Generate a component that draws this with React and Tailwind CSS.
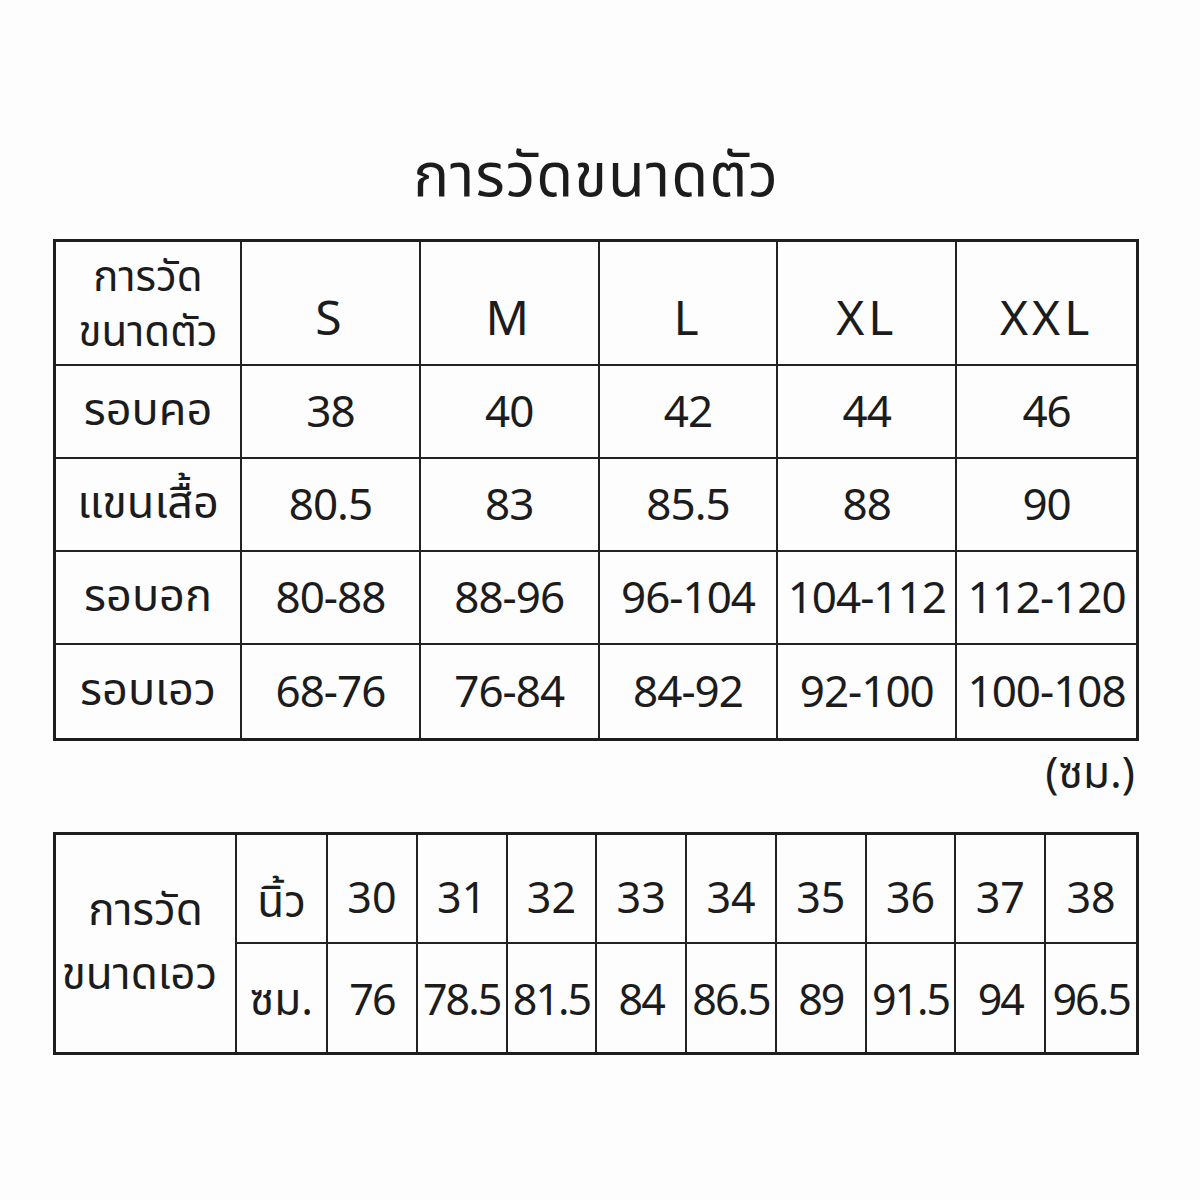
const sizes = ['S', 'M', 'L', 'XL', 'XXL'];

const rows = [
  { label: 'รอบคอ', values: ['38', '40', '42', '44', '46'] },
  { label: 'แขนเสื้อ', values: ['80.5', '83', '85.5', '88', '90'] },
  { label: 'รอบอก', values: ['80-88', '88-96', '96-104', '104-112', '112-120'] },
  { label: 'รอบเอว', values: ['68-76', '76-84', '84-92', '92-100', '100-108'] },
];

const inches = ['30', '31', '32', '33', '34', '35', '36', '37', '38'];
const cms = ['76', '78.5', '81.5', '84', '86.5', '89', '91.5', '94', '96.5'];

const font = { fontFamily: '"Noto Sans Thai", "Noto Sans", "DejaVu Sans", sans-serif' };

const App = () => {
  return (
    <div className="w-[1200px] h-[1200px] bg-[#fdfdfe] text-[#1c1c1c] flex flex-col items-start pl-[53px]" style={font}>
      <h1 className="w-[1086px] mt-[148px] h-[91px] text-center text-[60px] leading-none tracking-[1px]">การวัดขนาดตัว</h1>

      <div className="w-[1086px] border-[3px] border-[#1e1e1e] grid grid-cols-[186px_repeat(5,1fr)] grid-rows-[124px_repeat(4,93px)] text-[44px]">
        <div className="border-r-2 border-b-2 border-[#222] flex flex-col items-center justify-center gap-[2px] pt-2 text-[42px]">
          <span className="block leading-[50px]">การวัด</span>
          <span className="block leading-[56px]">ขนาดตัว</span>
        </div>
        {sizes.map((s, i) => (
          <div
            key={s}
            className={`border-b-2 border-[#222] flex items-center justify-center pt-9 leading-none text-[48px] tracking-[4px] ${i < 4 ? 'border-r-2' : ''}`}
          >
            {s}
          </div>
        ))}
        {rows.map((row, r) => (
          <>
            <div
              key={row.label}
              className={`border-r-2 border-[#222] flex items-center justify-center text-[45px] ${r < 3 ? 'border-b-2' : ''}`}
            >
              {row.label}
            </div>
            {row.values.map((v, i) => (
              <div
                key={row.label + i}
                className={`border-[#222] flex items-center justify-center pt-1 whitespace-nowrap tracking-[-1px] ${i < 4 ? 'border-r-2' : ''} ${r < 3 ? 'border-b-2' : ''}`}
              >
                {v}
              </div>
            ))}
          </>
        ))}
      </div>

      <div className="w-[1086px] flex justify-end pr-[4px] mt-[12px] h-[79px] text-[44px] leading-none">
        (ซม.)
      </div>

      <div className="w-[1086px] border-[3px] border-[#1e1e1e] grid grid-cols-[181px_91px_repeat(9,1fr)] grid-rows-[109px_108px] text-[43px]">
        <div className="row-span-2 border-r-2 border-[#222] flex flex-col items-center justify-center text-[44px]">
          <span className="block leading-[64px]">การวัด</span>
          <span className="block leading-[64px] -ml-3">ขนาดเอว</span>
        </div>
        <div className="border-r-2 border-b-2 border-[#222] flex items-end justify-center pb-4 leading-none text-[44px]">นิ้ว</div>
        {inches.map((v, i) => (
          <div
            key={'in' + i}
            className={`border-b-2 border-[#222] flex items-center justify-center pt-6 ${i < 8 ? 'border-r-2' : ''}`}
          >
            {v}
          </div>
        ))}
        <div className="border-r-2 border-[#222] flex items-center justify-center pt-2 text-[44px]">ซม.</div>
        {cms.map((v, i) => (
          <div
            key={'cm' + i}
            className={`border-[#222] flex items-center justify-center pt-2 tracking-[-2px] whitespace-nowrap ${i < 8 ? 'border-r-2' : ''}`}
          >
            {v}
          </div>
        ))}
      </div>
    </div>
  );
};

export default App;
